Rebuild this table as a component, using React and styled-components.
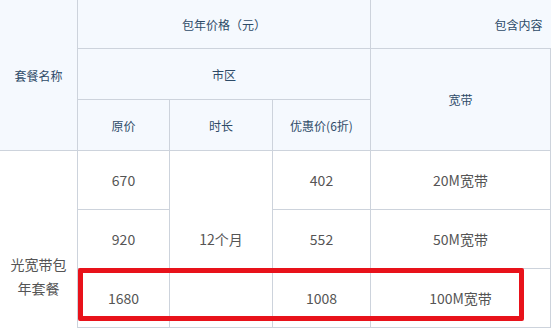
import React from "react";
import styled, { createGlobalStyle } from "styled-components";

const Global = createGlobalStyle`
  html, body { margin: 0; padding: 0; background: #ffffff; overflow: hidden; }
  body { width: 551px; height: 328px; }
`;

const Wrap = styled.div`
  position: relative;
  width: 551px;
  height: 328px;
  overflow: hidden;
  font-family: "Microsoft YaHei", "Noto Sans CJK SC", "Noto Sans", sans-serif;
`;

const Table = styled.table`
  border-collapse: collapse;
  table-layout: fixed;
  width: 667px;
  margin: -1px 0 0 -1px;
`;

const Head = styled.th`
  background: #f5f9fe;
  color: #2e4b68;
  font-weight: normal;
  font-size: 12px;
  border: 1px solid #cdd3dc;
  text-align: center;
  vertical-align: middle;
  padding: 0 8px;
`;

const Cell = styled.td`
  background: #ffffff;
  color: #555555;
  font-size: 14px;
  line-height: 24px;
  border: 1px solid #cdd3dc;
  text-align: center;
  vertical-align: middle;
  padding: 0 8px;
`;

const Row = styled.tr`
  height: ${(p) => p.$h}px;
`;

const Highlight = styled.div`
  position: absolute;
  left: 78px;
  top: 268px;
  width: 446px;
  height: 53px;
  box-sizing: border-box;
  border: 5px solid #e8121a;
  border-radius: 2px;
  pointer-events: none;
`;

const rows = [
  { price: "670", off: "402", bw: "20M宽带" },
  { price: "920", off: "552", bw: "50M宽带" },
  { price: "1680", off: "1008", bw: "100M宽带" },
];

export default function App() {
  return (
    <Wrap>
      <Global />
      <Table>
        <colgroup>
          <col style={{ width: 78 }} />
          <col style={{ width: 92 }} />
          <col style={{ width: 103 }} />
          <col style={{ width: 98 }} />
          <col style={{ width: 180 }} />
          <col style={{ width: 116 }} />
        </colgroup>
        <tbody>
          <Row $h={49}>
            <Head rowSpan={3}>套餐名称</Head>
            <Head colSpan={3}>包年价格（元）</Head>
            <Head colSpan={2}>包含内容</Head>
          </Row>
          <Row $h={51}>
            <Head colSpan={3}>市区</Head>
            <Head rowSpan={2}>宽带</Head>
            <Head rowSpan={2} />
          </Row>
          <Row $h={51}>
            <Head>原价</Head>
            <Head>时长</Head>
            <Head>优惠价(6折)</Head>
          </Row>
          {rows.map((r, i) => (
            <Row $h={59} key={r.price}>
              {i === 0 && <Cell rowSpan={4}>光宽带包年套餐</Cell>}
              <Cell>{r.price}</Cell>
              {i === 0 && <Cell rowSpan={3}>12个月</Cell>}
              <Cell>{r.off}</Cell>
              <Cell>{r.bw}</Cell>
              <Cell />
            </Row>
          ))}
          <Row $h={73}>
            <Cell />
            <Cell />
            <Cell />
            <Cell />
            <Cell />
          </Row>
        </tbody>
      </Table>
      <Highlight />
    </Wrap>
  );
}
